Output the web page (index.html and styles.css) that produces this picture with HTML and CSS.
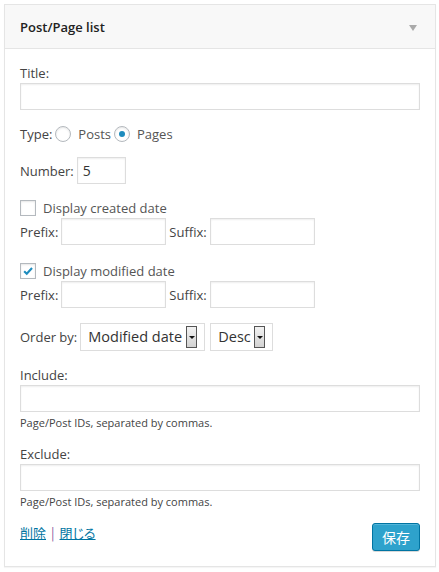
FILE: index.html
```html
<!DOCTYPE html>
<html lang="ja">
<head>
<meta charset="utf-8">
<title>Post/Page list</title>
<link rel="stylesheet" href="styles.css">
</head>
<body>
<div class="widget">
  <div class="widget-top">
    <h3 class="widget-title">Post/Page list</h3>
    <span class="toggle-arrow"></span>
  </div>
  <div class="widget-inside">
    <div class="field title-field">
      <label class="lbl">Title:</label>
      <input class="text wide" type="text">
    </div>

    <div class="row type-row">
      <span class="lbl">Type:</span>
      <span class="radio"></span><span class="opt">Posts</span>
      <span class="radio checked"></span><span class="opt">Pages</span>
    </div>

    <div class="row number-row">
      <span class="lbl">Number:</span>
      <input class="text num" type="text" value="5">
    </div>

    <div class="row check-row first-check">
      <span class="check"></span><span class="opt">Display created date</span>
    </div>
    <div class="row affix-row">
      <span class="lbl">Prefix:</span><input class="text affix" type="text">
      <span class="lbl suffix-lbl">Suffix:</span><input class="text affix" type="text">
    </div>

    <div class="row check-row second-check">
      <span class="check checked">
        <svg viewBox="0 0 16 16" width="16" height="16"><path d="M3.6 8.2 L6.6 11.2 L12.6 4.6" fill="none" stroke="#1e8cbe" stroke-width="2.4"/></svg>
      </span><span class="opt">Display modified date</span>
    </div>
    <div class="row affix-row">
      <span class="lbl">Prefix:</span><input class="text affix" type="text">
      <span class="lbl suffix-lbl">Suffix:</span><input class="text affix" type="text">
    </div>

    <div class="row order-row">
      <span class="lbl">Order by:</span>
      <span class="select select-wide"><span class="sel-text">Modified date</span><span class="sel-btn"></span></span>
      <span class="select select-narrow"><span class="sel-text">Desc</span><span class="sel-btn"></span></span>
    </div>

    <div class="field ids-field">
      <label class="lbl">Include:</label>
      <input class="text wide" type="text">
      <span class="desc">Page/Post IDs, separated by commas.</span>
    </div>

    <div class="field ids-field exclude">
      <label class="lbl">Exclude:</label>
      <input class="text wide" type="text">
      <span class="desc">Page/Post IDs, separated by commas.</span>
    </div>

    <div class="widget-control-actions">
      <div class="links">
        <a href="#" class="lnk">削除</a><span class="sep">|</span><a href="#" class="lnk">閉じる</a>
      </div>
      <button class="save" type="button">保存</button>
    </div>
  </div>
</div>
</body>
</html>
```

FILE: styles.css
```css
html, body {
  margin: 0;
  padding: 0;
  background: #ffffff;
}

body {
  font-family: "Open Sans", "Noto Sans CJK JP", sans-serif;
  font-size: 13px;
  color: #444;
}

.widget {
  margin: 4px;
  width: 432px;
  height: 563px;
  box-sizing: border-box;
  border: 1px solid #e5e5e5;
  background: #fff;
  box-shadow: 0 1px 1px rgba(0, 0, 0, 0.04);
}

.widget-top {
  height: 44px;
  box-sizing: border-box;
  background: #f8f8f8;
  border-bottom: 1px solid #e5e5e5;
  display: flex;
  align-items: center;
  justify-content: space-between;
  padding: 0 18px 0 15px;
}

.widget-title {
  margin: 0;
  font-size: 13px;
  font-weight: 600;
  color: #222;
  line-height: 18px;
}

.toggle-arrow {
  width: 0;
  height: 0;
  border-left: 4px solid transparent;
  border-right: 4px solid transparent;
  border-top: 6px solid #aaa;
  margin-top: 2px;
}

.widget-inside {
  padding: 15px 15px 0 15px;
  display: flex;
  flex-direction: column;
}

.lbl {
  line-height: 18px;
  color: #444;
}

.field {
  display: flex;
  flex-direction: column;
}

.text {
  box-sizing: border-box;
  height: 27px;
  border: 1px solid #ddd;
  box-shadow: inset 0 1px 2px rgba(0, 0, 0, 0.07);
  background: #fff;
  font-family: "Open Sans", sans-serif;
  font-size: 14px;
  color: #333;
  margin: 0;
  padding: 2px 6px;
  outline: none;
}

.wide {
  width: 400px;
  margin-top: 1px;
}

.row {
  display: flex;
  align-items: center;
}

.type-row {
  margin-top: 13px;
  height: 22px;
}

.radio {
  box-sizing: border-box;
  width: 16px;
  height: 16px;
  border-radius: 50%;
  border: 1px solid #b4b9be;
  background: #fff;
  box-shadow: inset 0 1px 2px rgba(0, 0, 0, 0.1);
  margin: 0 7px 0 3px;
  display: flex;
  align-items: center;
  justify-content: center;
}

.radio.checked::after {
  content: "";
  width: 6px;
  height: 6px;
  border-radius: 50%;
  background: #1e8cbe;
}

.opt {
  color: #555;
  line-height: 18px;
}

.type-row .opt:first-of-type {
  margin-right: 2px;
}

.number-row {
  margin-top: 12px;
  gap: 3px;
}

.num {
  width: 49px;
  height: 27px;
  padding: 2px 5px;
  font-size: 14px;
}

.check-row {
  margin-top: 15px;
  height: 18px;
}

.second-check {
  margin-top: 17px;
}

.check {
  box-sizing: border-box;
  width: 16px;
  height: 16px;
  border: 1px solid #b4b9be;
  background: #fff;
  box-shadow: inset 0 1px 2px rgba(0, 0, 0, 0.1);
  margin-right: 7px;
  display: flex;
  align-items: center;
  justify-content: center;
}

.check svg {
  display: block;
}

.affix-row {
  margin-top: 1px;
}

.affix {
  width: 105px;
  margin-left: 3px;
}

.suffix-lbl {
  margin-left: 3px;
}

.order-row {
  margin-top: 15px;
  height: 28px;
}

.select {
  box-sizing: border-box;
  height: 28px;
  border: 1px solid #ddd;
  background: #fff;
  display: flex;
  align-items: center;
  padding: 0 0 0 7px;
  font-size: 14.5px;
  color: #333;
}

.select-wide {
  width: 125px;
  margin-left: 3px;
}

.select-narrow {
  width: 63px;
  margin-left: 5px;
}

.sel-text {
  flex: 1;
  line-height: 20px;
  white-space: nowrap;
}

.sel-btn {
  box-sizing: border-box;
  flex: none;
  width: 11px;
  height: 22px;
  border: 1px solid #555;
  background: linear-gradient(#f2f2f2, #d2d2d2);
  margin-right: 7px;
  display: flex;
  align-items: center;
  justify-content: center;
}

.sel-btn::after {
  content: "";
  width: 0;
  height: 0;
  border-left: 3px solid transparent;
  border-right: 3px solid transparent;
  border-top: 3px solid #111;
}

.ids-field {
  margin-top: 15px;
}

.exclude {
  margin-top: 15px;
}

.ids-field .wide {
  margin-top: 1px;
}

.desc {
  font-size: 11px;
  line-height: 15px;
  margin-top: 3px;
  color: #444;
}

.widget-control-actions {
  margin-top: 14px;
  display: flex;
  justify-content: space-between;
  align-items: flex-start;
}

.links {
  line-height: 18px;
  padding-top: 1px;
  font-family: "Noto Sans CJK JP", sans-serif;
  font-feature-settings: "palt";
}

.lnk {
  color: #0074a2;
  text-decoration: underline;
}

.sep {
  color: #8a5a9e;
  margin: 0 5px;
}

.save {
  box-sizing: border-box;
  width: 48px;
  height: 28px;
  border: 1px solid #0074a2;
  border-radius: 3px;
  background: #2ea2cc;
  box-shadow: inset 0 1px 0 rgba(120, 200, 230, 0.5), 0 1px 0 rgba(0, 0, 0, 0.15);
  color: #fff;
  font-family: "Noto Sans CJK JP", sans-serif;
  font-size: 14px;
  padding: 0;
  line-height: 26px;
}
```
